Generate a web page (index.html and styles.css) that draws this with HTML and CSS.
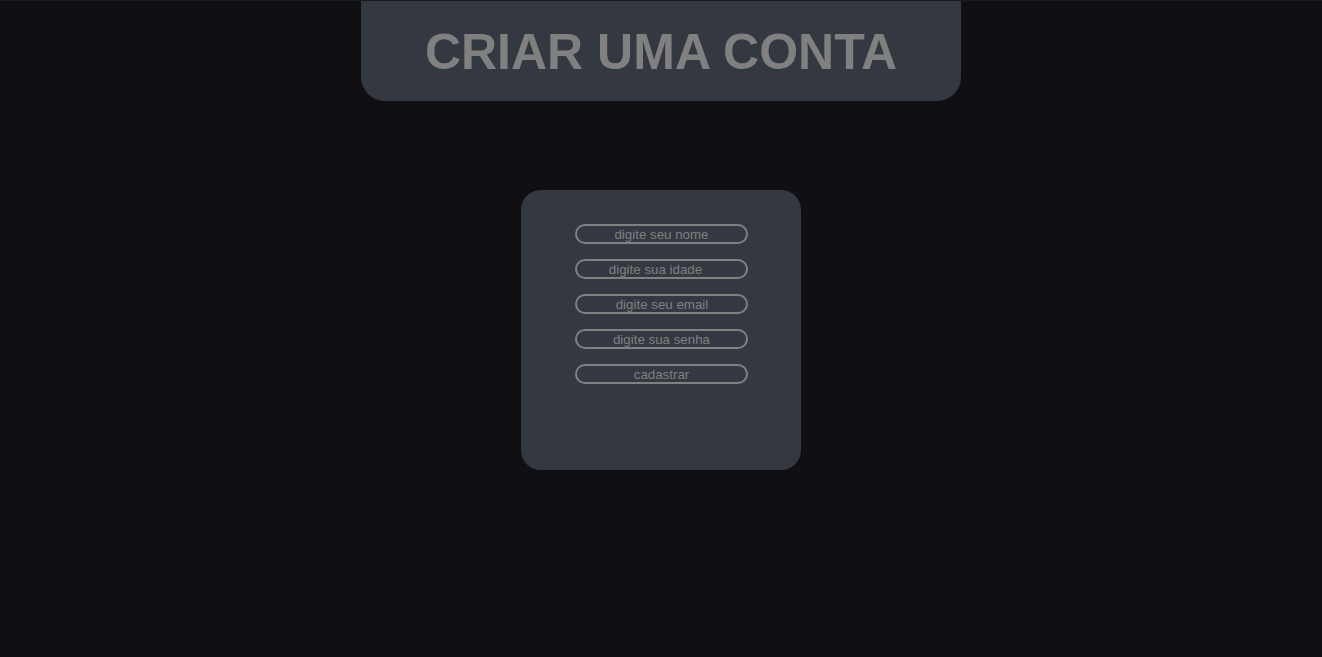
FILE: index.html
```html
<!DOCTYPE html>
<html lang="pt">
<head>
<meta charset="utf-8">
<title>Criar uma conta</title>
<link rel="stylesheet" href="styles.css">
</head>
<body>
<header class="topo">
  <h1 class="titulo">CRIAR UMA CONTA</h1>
</header>
<main class="area">
  <form class="cartao">
    <input class="campo" type="text" placeholder="digite seu nome">
    <input class="campo campo-idade" type="text" placeholder="digite sua idade">
    <input class="campo campo-email" type="text" placeholder="digite seu email">
    <input class="campo" type="password" placeholder="digite sua senha">
    <button class="campo botao" type="button">cadastrar</button>
  </form>
</main>
</body>
</html>
```

FILE: styles.css
```css
html, body {
  margin: 0;
  padding: 0;
}
body {
  background: #101014;
  border-top: 1px solid #1a1b20;
  min-height: 656px;
  font-family: "Liberation Sans", Arial, sans-serif;
}
.topo {
  width: 600px;
  height: 100px;
  margin: 0 auto;
  background: #343840;
  border-radius: 0 0 24px 24px;
  display: flex;
  align-items: center;
  justify-content: center;
}
.titulo {
  margin: 0;
  color: #808080;
  font-size: 50px;
  font-weight: bold;
  line-height: 1;
  padding-top: 2px;
}
.area {
  display: flex;
  justify-content: center;
  padding-top: 89px;
}
.cartao {
  width: 280px;
  height: 280px;
  box-sizing: border-box;
  background: #343840;
  border-radius: 20px;
  display: flex;
  flex-direction: column;
  align-items: center;
  padding-top: 34px;
  gap: 15px;
}
.campo {
  box-sizing: border-box;
  width: 173px;
  height: 20px;
  margin: 0 0 0 1px;
  padding: 0 2px;
  border: 2px solid #808080;
  border-radius: 10px;
  background: transparent;
  color: #808080;
  font-family: "Liberation Sans", Arial, sans-serif;
  font-size: 13.33px;
  text-align: center;
  outline: none;
}
.campo::placeholder {
  color: #808080;
  opacity: 1;
}
.campo-idade {
  padding-right: 14px;
}
.campo-email {
  padding-left: 3px;
}
.botao {
  cursor: pointer;
  line-height: 14px;
  padding-top: 2px;
}
```
